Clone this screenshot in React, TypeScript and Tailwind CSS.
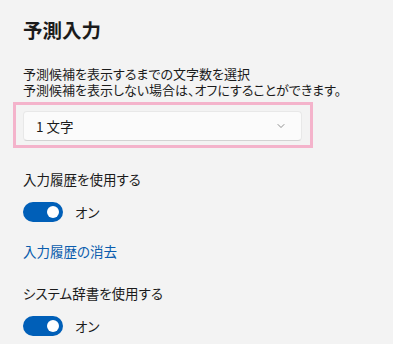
import { ChevronDown } from 'lucide-react'

const jp = { fontFamily: '"Noto Sans CJK JP", "Noto Sans", sans-serif', fontFeatureSettings: '"palt"' }

function Toggle({ label }: { label: string }) {
  return (
    <div className="flex items-center h-[20px]">
      <div className="relative w-[40px] h-[20px] rounded-full bg-[#005fb8]">
        <span className="absolute right-[4px] top-[4px] w-[12px] h-[12px] rounded-full bg-white" />
      </div>
      <span className="ml-[12px] text-[13.5px] leading-[20px] text-[#1b1b1b]">{label}</span>
    </div>
  )
}

export default function App() {
  return (
    <div className="w-[393px] h-[344px] overflow-hidden bg-[#f3f3f3] text-[#1b1b1b]" style={jp}>
      <div className="pl-[23px] pt-[16px] flex flex-col">
        <h1 className="text-[19.5px] leading-[28px] font-semibold">予測入力</h1>

        <p className="mt-[22px] text-[13px] leading-[16px]">
          予測候補を表示するまでの文字数を選択
          <br />
          予測候補を表示しない場合は、オフにすることができます。
        </p>

        <div className="mt-[4px] -ml-[10px] w-[300px] h-[46px] border-[3px] border-[#f4b3cb] pt-[6px] pl-[7px] pr-[8px]">
          <div className="h-[30px] rounded-[4px] bg-[#fbfbfb] border border-[#e8e8e8] border-b-[#d2d2d2] flex items-center justify-between pl-[12px] pr-[14px]">
            <span className="text-[13.5px] leading-[20px]">1 文字</span>
            <ChevronDown size={12} strokeWidth={1.4} className="text-[#606060]" />
          </div>
        </div>

        <div className="mt-[21px] text-[13.5px] leading-[20px]">入力履歴を使用する</div>
        <div className="mt-[13px]">
          <Toggle label="オン" />
        </div>

        <a className="mt-[19px] text-[13.5px] leading-[20px] text-[#0a5cad] w-fit">入力履歴の消去</a>

        <div className="mt-[22px] text-[13.5px] leading-[20px]">システム辞書を使用する</div>
        <div className="mt-[13px]">
          <Toggle label="オン" />
        </div>
      </div>
    </div>
  )
}
